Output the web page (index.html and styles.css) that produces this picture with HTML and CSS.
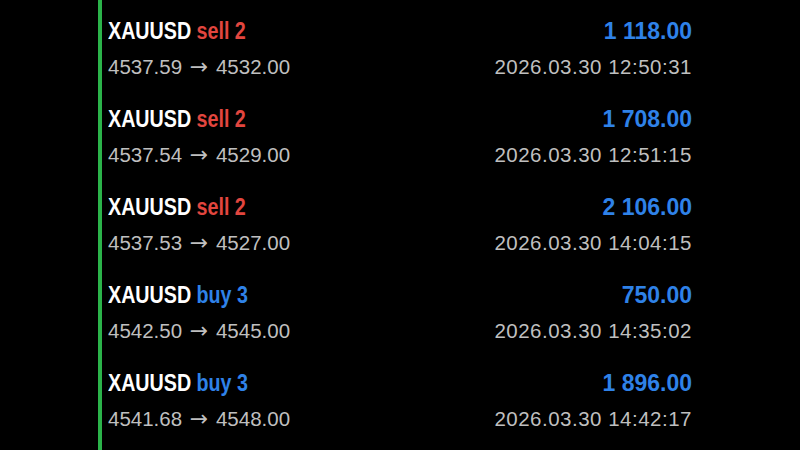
FILE: index.html
```html
<!DOCTYPE html>
<html lang="en">
<head>
    <meta charset="UTF-8">
    <title>Trades</title>
    <link rel="stylesheet" href="styles.css">
</head>
<body>
    <ul class="trades">
        <li class="trade">
            <div class="line top">
                <span class="symbol">XAUUSD <span class="side sell">sell 2</span></span>
                <span class="profit">1 118.00</span>
            </div>
            <div class="line bottom">
                <span class="prices">4537.59 <span class="arrow">→</span> 4532.00</span>
                <span class="time">2026.03.30 12:50:31</span>
            </div>
        </li>
        <li class="trade">
            <div class="line top">
                <span class="symbol">XAUUSD <span class="side sell">sell 2</span></span>
                <span class="profit">1 708.00</span>
            </div>
            <div class="line bottom">
                <span class="prices">4537.54 <span class="arrow">→</span> 4529.00</span>
                <span class="time">2026.03.30 12:51:15</span>
            </div>
        </li>
        <li class="trade">
            <div class="line top">
                <span class="symbol">XAUUSD <span class="side sell">sell 2</span></span>
                <span class="profit">2 106.00</span>
            </div>
            <div class="line bottom">
                <span class="prices">4537.53 <span class="arrow">→</span> 4527.00</span>
                <span class="time">2026.03.30 14:04:15</span>
            </div>
        </li>
        <li class="trade">
            <div class="line top">
                <span class="symbol">XAUUSD <span class="side buy">buy 3</span></span>
                <span class="profit">750.00</span>
            </div>
            <div class="line bottom">
                <span class="prices">4542.50 <span class="arrow">→</span> 4545.00</span>
                <span class="time">2026.03.30 14:35:02</span>
            </div>
        </li>
        <li class="trade">
            <div class="line top">
                <span class="symbol">XAUUSD <span class="side buy">buy 3</span></span>
                <span class="profit">1 896.00</span>
            </div>
            <div class="line bottom">
                <span class="prices">4541.68 <span class="arrow">→</span> 4548.00</span>
                <span class="time">2026.03.30 14:42:17</span>
            </div>
        </li>
    </ul>
</body>
</html>
```

FILE: styles.css
```css
* {
    padding: 0px;
    margin: 0px;
    list-style: none;
    box-sizing: border-box;
}
html, body {
    background: #000;
    height: 100%;
    overflow: hidden;
}
.trades {
    margin-left: 98px;
    width: 594px;
    height: 450px;
    border-left: 4px solid #2bb34a;
    padding-left: 6px;
}
.trade {
    height: 88px;
    padding-top: 17px;
}
.line {
    display: flex;
    justify-content: space-between;
    align-items: baseline;
}
.line.top {
    height: 28px;
    line-height: 28px;
}
.line.bottom {
    margin-top: 9px;
    height: 26px;
    line-height: 26px;
    font-family: "Liberation Sans", Arial, sans-serif;
    font-size: 20.5px;
    color: #bfbfbf;
}
.symbol {
    display: inline-block;
    font-family: "Liberation Sans", Arial, sans-serif;
    font-weight: bold;
    font-size: 24px;
    color: #fff;
    transform: scaleX(0.82);
    transform-origin: left center;
    white-space: nowrap;
}
.side.sell {
    color: #e2463f;
}
.side.buy {
    color: #2f82e8;
}
.profit {
    font-family: "Liberation Sans", Arial, sans-serif;
    font-weight: bold;
    font-size: 23px;
    color: #2f82e8;
}
.arrow {
    font-family: "DejaVu Sans", sans-serif;
    font-size: 22px;
    margin: 0 2px;
}
.time {
    letter-spacing: 0.5px;
}
```
